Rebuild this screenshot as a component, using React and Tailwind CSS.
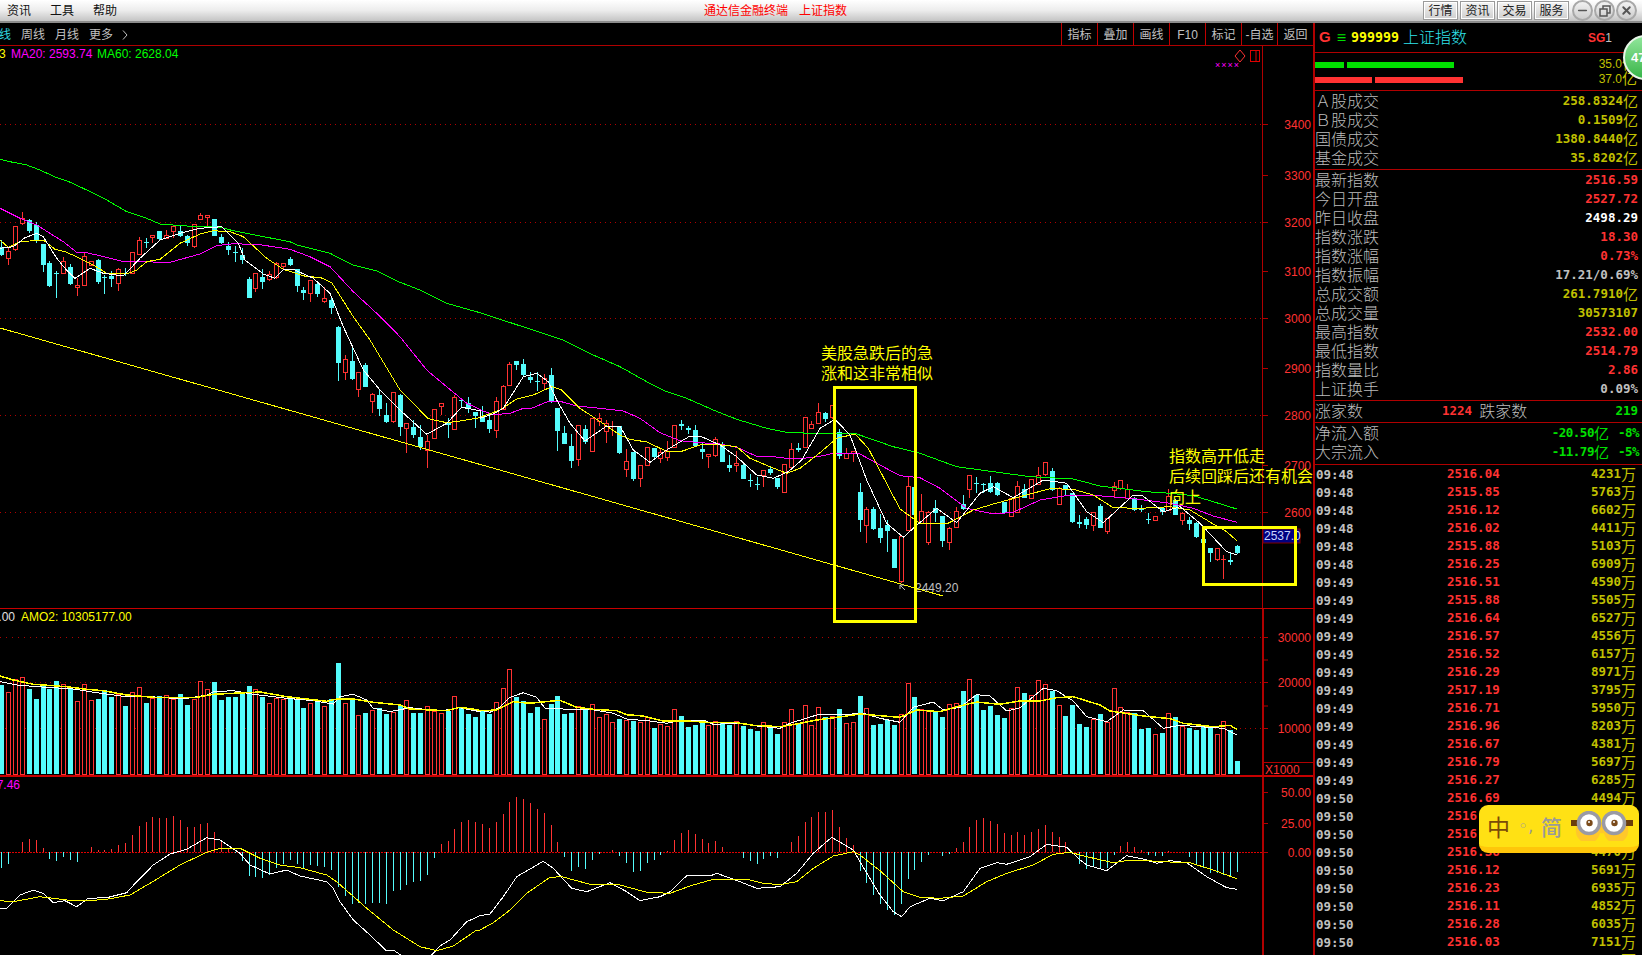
import { Minus, X } from "lucide-react";

const CYAN = "#54fcfc";
const RED = "#ff3232";
const GRID = "#b00000";

// candles as [isRed, bodyTop, bodyBottom, high, low], measured on 3x crops
const candlesA = [
  [0,350,376,330,378],[1,363,384,350,405],[1,289,356,289,362],[1,263,278,246,285],[0,271,304,268,308],
  [0,286,330,277,338],[0,343,405,343,425],[0,398,469,394,472],[0,429,429,423,503],[1,394,429,381,430],
  [0,411,462,403,466],[1,466,472,445,498],[1,379,464,368,465],[1,394,405,392,408],[0,390,456,388,462],
  [0,441,441,436,492],[0,437,447,424,471],[1,418,458,414,484],[0,429,431,414,438],[1,367,428,367,430],
  [1,331,371,322,372],[0,336,336,324,354],[1,314,320,314,340],[0,303,328,303,330],[1,314,323,301,326],
  [1,288,304,286,324],[0,304,318,285,320],[0,318,339,314,348],[1,283,347,281,354],[1,254,266,250,270],
  [1,254,260,254,288],[0,267,318,267,318],[0,322,339,313,342],[0,348,359,337,375],[0,366,366,348,396],
  [0,376,390,354,402],[0,448,503,441,503],[1,428,475,428,486],[0,441,455,418,477],[1,433,447,424,453],
  [1,399,441,395,446],[1,398,408,398,420],[0,387,404,380,407],[0,418,467,418,486],[0,480,489,472,510],
  [1,451,490,450,516],[0,463,491,460,500],[1,503,512,472,518],[0,511,533,503,552],[0,591,698,589,752],
  [1,688,727,676,750],[0,693,748,652,750],[1,727,776,727,801],[0,706,770,700,771],[1,793,814,790,850],
  [0,796,836,776,858],[0,856,876,820,880],[1,787,872,787,880],[0,796,890,793,918],[1,878,895,878,968],
  [0,891,916,870,923],[0,921,951,886,960],[1,934,960,915,1013],[1,836,925,836,926],[1,818,829,818,855],
  [0,879,885,865,923],[1,802,898,795,900],[0,810,810,805,830],[0,820,835,802,848],[0,846,858,846,894],
];
const candlesB = [
  [0,228,245,198,246],[0,240,267,222,278],[1,184,271,170,293],[1,138,207,135,208],[1,73,136,66,137],
  [0,64,75,64,90],[0,72,105,57,110],[0,112,120,97,130],[0,122,122,97,152],[1,115,130,102,148],
  [0,105,187,84,190],[0,205,272,205,332],[0,280,312,258,313],[0,319,362,283,383],[1,256,356,256,378],
  [0,268,305,255,312],[1,235,332,234,333],[1,235,244,220,258],[1,248,272,240,308],[1,258,258,243,288],
  [0,259,339,259,342],[1,364,386,328,410],[0,336,417,336,422],[1,376,413,376,440],[1,322,374,320,376],
  [0,324,352,324,358],[1,337,353,325,368],[1,332,350,304,362],[1,256,321,256,322],[0,253,259,240,269],
  [0,263,271,258,283],[0,270,318,255,318],[0,327,335,307,357],[1,343,349,343,384],[1,298,344,292,352],
  [0,315,366,307,367],[0,375,384,345,396],[1,370,376,333,396],[0,375,417,372,418],[0,419,419,402,440],
  [0,431,431,410,450],[1,391,404,391,441],[0,387,398,378,405],[0,415,441,415,447],[1,373,455,373,456],
];
const candlesC = [
  [1,358,410,340,411],[0,353,360,340,365],[1,262,352,262,353],[1,283,293,274,296],[1,247,278,219,279],
  [0,250,267,247,275],[1,226,262,226,266],[0,305,378,298,386],[1,370,383,354,384],[1,364,370,364,396],
  [0,487,570,460,606],[1,538,586,530,638],[0,538,596,532,600],[0,595,623,552,638],[0,586,602,570,666],
  [0,627,714,627,714],[1,619,752,617,760],[1,469,599,440,600],[0,471,556,471,560],[1,544,580,492,582],
  [1,545,635,544,645],[0,533,548,510,576],[0,558,632,558,650],[1,595,637,590,660],[1,544,590,532,592],
  [0,523,537,495,541],[1,436,478,436,503],[0,459,459,441,490],[0,461,461,458,490],[0,460,486,438,488],
  [0,460,495,456,498],[0,517,550,515,551],[1,505,559,505,560],[1,469,547,453,549],[0,477,503,462,505],
  [1,448,503,448,504],[1,434,462,411,464],[1,397,432,397,437],[0,424,480,414,482],[1,473,521,470,522],
  [0,466,480,464,495],[0,490,576,488,580],[0,576,582,556,594],[0,567,584,560,597],[1,547,584,545,603],
  [0,527,594,522,595],[1,565,602,565,612],[1,469,481,455,504],[1,451,473,451,480],[1,476,505,462,506],
  [0,504,540,502,542],[0,536,536,524,547],[0,566,566,548,582],[1,557,569,557,570],[0,534,545,534,554],
  [1,498,540,478,541],[0,510,554,508,555],[1,549,569,545,585],[0,570,582,560,600],[0,578,622,576,625],
  [0,627,638,600,640],[0,654,668,654,696],[1,655,686,655,693],[1,688,688,676,746],[0,690,695,670,705],
  [0,649,669,645,672],
];

const toY = (oy, z) => oy + z / 3;
const candles = [
  ...candlesA.map((c) => [c[0], ...c.slice(1).map((z) => toY(130, z))]),
  ...candlesB.map((c) => [c[0], ...c.slice(1).map((z) => toY(340, z))]),
  ...candlesC.map((c) => [c[0], ...c.slice(1).map((z) => toY(330, z))]),
];
const slotX = (i) => Math.floor(1.9 + 6.865 * i);

const volTops = [
  ...[255,277,238,232,267,297,258,267,243,253,267,304,253,301,297,271,291,283,318,277,262,309,294,288,286,297,282,315,297,244,268,246,300,291,291,276,258,268,291,310,295,298,291,300,324,310,306,319,297,189,310,300,346,339,331,324,342,336,318,301,339,339,319,333,340,333,289,324,342,351,333,342,307].map((z) => toY(600, z)),
  ...[205,148,231,243,279,261,298,252,228,282,279,259,264,253,292,283,307,297,301,303,305,292,324,313,319,268,288,321,315,303,316,304,309,315,304,318,327,333,307,318,342,307,268,313].map((z) => toY(620, z)),
  ...[256,314,262,290,289,267,310,307,228,265,315,313,300,315,283,190,231,266,271,277,291,253,250,213,178,226,270,258,285,294,265,202,219,226,181,193,213,256,288,255,312,321,297,282,306,205,262,277,280,327,324,343,339,280,291,318,324,330,318,324,343,304,330,423].map((z) => toY(620, z)),
];

const macdEnds = [
  ...[803,792,0,726,717,720,744,776,782,770,779,785,0,741,750,750,747,735,729,705,678,666,651,654,654,648,660,681,681,672,670,696,726,746,760,782,828,830,833,826,805,792,780,792,804,795,798,801,810,862,888,912,908,912,909,909,912,873,870,855,846,843,825,774,732,723,687,666,660,666,672,684,666].map((z) => (z ? toY(600, z) : 0)),
  ...[582,546,531,537,549,567,579,615,666,710,752,740,746,720,702,0,690,708,728,755,752,728,720,705,693,660,639,630,642,657,669,663,681,696,0,714,722,731,717,708,714,0,666,648].map((z) => (z ? toY(620, z) : 0)),
  ...[607,591,576,576,570,621,654,676,752,790,825,851,870,885,852,776,750,725,705,696,707,702,684,666,621,600,594,603,612,639,645,636,645,636,627,615,636,651,666,700,732,747,738,747,744,705,678,666,682,690,705,708,708,693,697,697,710,732,744,759,759,765,768,756].map((z) => (z ? toY(620, z) : 0)),
];

// polylines: each part is [originX, originY, zoomed points]
const pts = (...parts) =>
  parts
    .flatMap(([ox, oy, list]) => list.map(([x, y]) => `${(ox + x / 3).toFixed(1)},${(oy + y / 3).toFixed(1)}`))
    .join(" ");

const ma60 = pts(
  [0,130,[[0,88],[30,95],[80,105],[120,120],[170,143],[200,152],[260,180],[320,210],[380,245],[440,265],[480,282],[560,288],[660,292],[700,302],[780,318],[870,335],[890,345],[990,370],[1060,405],[1130,423],[1200,457],[1260,480],[1340,520],[1440,548]]],
  [480,340,[[250,0],[340,45],[420,80],[500,125],[560,155],[620,175],[700,210],[770,238],[860,265],[920,277],[1020,281]]],
  [780,330,[[230,312],[340,350],[420,370],[530,410],[750,440],[880,447],[960,468],[1100,485],[1170,490],[1240,497],[1300,515],[1370,537]]]
);
const ma20 = pts(
  [0,130,[[0,235],[60,265],[110,285],[190,335],[230,367],[260,368],[320,382],[370,395],[420,393],[470,397],[510,397],[600,372],[650,347],[700,341],[780,344],[870,358],[930,380],[990,410],[1060,485],[1130,550],[1200,620],[1280,720],[1340,770],[1400,820],[1440,838]]],
  [480,340,[[0,210],[40,224],[90,220],[130,205],[155,205],[200,186],[240,184],[290,198],[360,205],[430,213],[480,235],[540,278],[600,302],[660,308],[720,312],[770,322],[830,349],[880,350],[920,355],[960,356],[1020,349]]],
  [780,330,[[160,370],[240,372],[300,405],[360,437],[420,443],[480,475],[560,535],[640,552],[700,547],[780,510],[870,495],[930,495],[1050,505],[1170,520],[1240,535],[1300,558],[1370,577]]]
);
const ma10 = pts(
  [0,130,[[0,330],[25,352],[60,335],[130,330],[165,358],[195,365],[230,380],[280,405],[320,430],[380,432],[410,420],[440,395],[480,388],[540,340],[600,312],[640,302],[690,305],[730,320],[800,385],[850,418],[920,440],[960,442],[995,458],[1060,560],[1110,630],[1200,780],[1285,866],[1340,878],[1380,873],[1440,863]]],
  [480,340,[[0,232],[60,210],[110,177],[160,165],[215,140],[245,150],[300,205],[350,238],[420,285],[450,298],[500,306],[560,334],[605,334],[660,315],[700,312],[770,320],[810,355],[870,380],[920,400],[960,385],[1020,338]]],
  [780,330,[[170,325],[225,312],[265,355],[360,537],[420,580],[500,582],[580,540],[640,522],[720,500],[810,476],[880,478],[940,495],[1000,533],[1080,535],[1170,530],[1230,540],[1300,582],[1340,605],[1370,632]]]
);
const ma5 = pts(
  [0,130,[[0,355],[40,350],[75,323],[110,310],[130,320],[170,385],[195,415],[225,445],[270,415],[310,430],[370,438],[420,385],[480,330],[540,310],[600,295],[665,290],[715,340],[735,390],[790,432],[825,445],[850,420],[880,418],[940,445],[990,490],[1030,590],[1090,720],[1140,780],[1200,840],[1280,913],[1340,880],[1385,832],[1440,842]]],
  [480,340,[[0,235],[40,222],[70,205],[130,110],[170,100],[205,125],[230,180],[270,250],[315,303],[380,258],[420,258],[460,330],[510,367],[560,330],[630,288],[660,288],[720,315],[770,350],[830,405],[880,415],[925,395],[965,360],[1020,265]]],
  [780,330,[[165,268],[210,315],[260,450],[320,580],[370,622],[405,590],[470,535],[530,578],[600,490],[640,470],[700,503],[790,450],[860,460],[920,545],[970,578],[1060,495],[1085,495],[1150,545],[1200,530],[1260,580],[1340,665],[1370,675]]]
);
const volWhite = pts(
  [0,600,[[0,245],[50,255],[110,260],[220,267],[290,278],[370,289],[450,290],[550,297],[620,285],[640,275],[700,272],[760,283],[860,295],[940,302],[1000,312],[1020,290],[1060,283],[1100,300],[1120,325],[1170,335],[1230,323],[1320,333],[1380,323],[1440,335]]],
  [480,620,[[0,270],[30,277],[60,262],[90,232],[130,218],[170,232],[195,265],[270,268],[330,268],[400,280],[440,297],[510,303],[560,310],[600,302],[640,302],[670,300],[700,313],[780,310],[830,318],[900,325]]],
  [780,620,[[30,310],[110,285],[200,283],[250,280],[300,295],[360,307],[400,262],[460,246],[490,270],[540,262],[590,224],[630,228],[680,273],[720,263],[790,205],[830,212],[880,243],[920,290],[980,305],[1030,270],[1090,272],[1150,325],[1200,316],[1260,320],[1330,325],[1370,345]]]
);
const volYellow = pts(
  [0,600,[[0,228],[40,240],[100,253],[200,260],[260,268],[310,272],[380,285],[460,292],[590,292],[640,283],[780,276],[860,290],[980,304],[1010,297],[1060,297],[1120,307],[1200,315],[1230,327],[1340,332],[1380,322],[1430,329]]],
  [480,620,[[0,272],[50,270],[100,245],[150,250],[240,241],[290,262],[340,268],[410,272],[440,284],[490,288],[550,303],[620,303],[700,308],[770,308],[820,316],[900,320]]],
  [780,620,[[50,312],[110,300],[200,288],[240,282],[300,287],[360,292],[410,270],[480,275],[540,258],[590,246],[660,253],[720,243],[780,243],[830,233],[880,230],[960,255],[990,273],[1090,288],[1170,296],[1210,310],[1300,320],[1350,316],[1370,328]]]
);
const difLeft = pts(
  [0,600,[[0,925],[20,925],[60,885],[100,870],[130,880],[160,908],[195,902],[230,920],[265,895],[320,893],[380,878],[410,845],[460,795],[510,762],[560,748],[620,713],[660,720],[720,760],[750,795],[810,822],[860,810],[900,828],[980,845],[1000,865],[1020,905],[1060,960],[1110,1005],[1160,1053],[1180,1050],[1210,1070]]]
);
const difRight = pts(
  [0,600,[[1290,1070],[1320,1038],[1350,1020],[1400,965]]],
  [480,620,[[0,887],[30,882],[70,830],[110,770],[190,724],[220,745],[275,805],[320,815],[390,788],[440,815],[480,842],[540,830],[570,815],[620,767],[690,768],[710,760],[780,785],[830,805],[900,800]]],
  [780,620,[[50,760],[100,700],[155,652],[220,690],[240,725],[300,825],[340,875],[365,890],[390,860],[450,835],[490,842],[550,815],[600,745],[650,728],[680,733],[750,710],[800,673],[860,682],[900,720],[920,735],[980,752],[1040,707],[1090,717],[1130,730],[1170,722],[1220,728],[1280,770],[1340,803],[1370,808]]]
);
const dea = pts(
  [0,600,[[0,902],[40,905],[120,890],[200,900],[260,902],[320,898],[390,885],[450,850],[540,795],[620,757],[660,745],[720,745],[780,775],[840,795],[900,803],[980,825],[1010,845],[1100,925],[1180,990],[1260,1040],[1310,1052],[1360,1038],[1430,990]]],
  [480,620,[[0,930],[40,908],[90,870],[140,820],[210,772],[245,770],[330,793],[420,795],[500,817],[570,820],[630,798],[700,778],[800,778],[850,790],[900,794]]],
  [780,620,[[50,785],[100,745],[160,708],[220,695],[240,705],[300,752],[370,815],[420,832],[480,835],[550,828],[620,785],[680,760],[760,735],[820,703],[870,697],[920,710],[1000,728],[1050,720],[1100,722],[1170,726],[1230,728],[1300,750],[1370,776]]]
);

const quotes = [
  ["Ａ股成交", "258.8324", "亿"],
  ["Ｂ股成交", "0.1509", "亿"],
  ["国债成交", "1380.8440", "亿"],
  ["基金成交", "35.8202", "亿"],
];
const indexRows = [
  ["最新指数", "2516.59", "text-[#ff3232]"],
  ["今日开盘", "2527.72", "text-[#ff3232]"],
  ["昨日收盘", "2498.29", "text-white"],
  ["指数涨跌", "18.30", "text-[#ff3232]"],
  ["指数涨幅", "0.73%", "text-[#ff3232]"],
  ["指数振幅", "17.21/0.69%", "text-[#c0c0c0]"],
  ["总成交额", "261.7910", "text-[#c0c000]", "亿"],
  ["总成交量", "30573107", "text-[#c0c000]"],
  ["最高指数", "2532.00", "text-[#ff3232]"],
  ["最低指数", "2514.79", "text-[#ff3232]"],
  ["指数量比", "2.86", "text-[#ff3232]"],
  ["上证换手", "0.09%", "text-[#c0c0c0]"],
];
const trades = [
  ["09:48","2516.04","4231"],["09:48","2515.85","5763"],["09:48","2516.12","6602"],["09:48","2516.02","4411"],
  ["09:48","2515.88","5103"],["09:48","2516.25","6909"],["09:49","2516.51","4590"],["09:49","2515.88","5505"],
  ["09:49","2516.64","6527"],["09:49","2516.57","4556"],["09:49","2516.52","6157"],["09:49","2516.29","8971"],
  ["09:49","2517.19","3795"],["09:49","2516.71","5950"],["09:49","2516.96","8203"],["09:49","2516.67","4381"],
  ["09:49","2516.79","5697"],["09:49","2516.27","6285"],["09:50","2516.69","4494"],["09:50","2516",""],
  ["09:50","2516",""],["09:50","2516.36","4470"],["09:50","2516.12","5691"],["09:50","2516.23","6935"],
  ["09:50","2516.11","4852"],["09:50","2516.28","6035"],["09:50","2516.03","7151"],["","","4"],
];

const MONO = "font-['DejaVu_Sans_Mono',monospace] font-bold text-[12.5px]";

const Dotted = ({ y, dash = "1 4" }) => (
  <line x1="0" x2="1263" y1={y} y2={y} stroke={GRID} strokeDasharray={dash} shapeRendering="crispEdges" />
);
const AxisLabel = ({ y, children }) => (
  <g>
    <line x1="1263" x2="1268" y1={y} y2={y} stroke={GRID} shapeRendering="crispEdges" />
    <text x="1311" y={y + 5} fontSize="12" fill={RED} textAnchor="end">{children}</text>
  </g>
);

const Line = ({ points, color, width = 1 }) => (
  <polyline points={points} fill="none" stroke={color} strokeWidth={width} shapeRendering="crispEdges" />
);

function Candle({ data, i }) {
  const [isRed, top, bottom, high, low] = data;
  const x = slotX(i);
  const color = isRed ? RED : CYAN;
  return (
    <g shapeRendering="crispEdges">
      <rect x={x} y={high} width="1" height={Math.max(top - high, 0)} fill={color} />
      <rect x={x} y={bottom} width="1" height={Math.max(low - bottom, 0)} fill={color} />
      {top === bottom ? (
        <rect x={x - 2} y={top} width="5" height="1" fill={color} />
      ) : isRed ? (
        <rect x={x - 1.5} y={top + 0.5} width="4" height={bottom - top} fill="#000" stroke={color} />
      ) : (
        <rect x={x - 2} y={top} width="5" height={bottom - top} fill={color} />
      )}
    </g>
  );
}

function MainChart() {
  return (
    <svg width="1314" height="563" viewBox="0 46 1314 563" className="block relative z-10 overflow-visible">
      {[124, 222, 318, 415, 512].map((y) => <Dotted key={y} y={y} />)}
      <text x="-1" y="58" fontSize="12" fill="#ffff00">3</text>
      <text x="11" y="58" fontSize="12" fill="#ff00ff">MA20: 2593.74</text>
      <text x="97" y="58" fontSize="12" fill="#00ff00">MA60: 2628.04</text>
      <polygon points="1240,50 1245,56 1240,62 1235,56" fill="none" stroke={RED} />
      <rect x="1250.5" y="50.5" width="9" height="11" fill="none" stroke="#e00000" />
      <line x1="1256" x2="1256" y1="50" y2="62" stroke="#e00000" />
      <text x="1215" y="68" fontSize="9" fill="#ff00ff" letterSpacing="1">××××</text>

      <line x1="1262.5" x2="1262.5" y1="46" y2="609" stroke={GRID} />
      {[[124,3400],[175,3300],[222,3200],[271,3100],[318,3000],[368,2900],[415,2800],[465,2700],[512,2600]].map(([y, label]) => (
        <AxisLabel key={label} y={y}>{label}</AxisLabel>
      ))}

      {candles.map((c, i) => <Candle key={i} data={c} i={i} />)}
      <Line points={ma60} color="#00ff00" />
      <Line points={ma20} color="#ff00ff" />
      <Line points={ma10} color="#ffff00" />
      <Line points={ma5} color="#ffffff" />
      <Line points="0,328 943,596" color="#ffff00" />

      <path d="M905 590 L900 585 M900 585 L900 589 M900 585 L904 585" stroke="#c0c0c0" fill="none" />
      <text x="915" y="592" fontSize="12" fill="#c0c0c0">2449.20</text>

      <rect x="1263" y="529" width="37" height="14" fill="#000080" stroke="#800000" />
      <text x="1264" y="540" fontSize="12" fill="#c8d4ff">2537.0</text>

      <line x1="0" x2="1314" y1="608.5" y2="608.5" stroke="#c80000" />
      <rect x="834.5" y="387.5" width="81" height="234" fill="none" stroke="#ffff00" strokeWidth="3" shapeRendering="crispEdges" />
      <rect x="1203.5" y="527.5" width="92" height="57" fill="none" stroke="#ffff00" strokeWidth="3" shapeRendering="crispEdges" />
      <g fontSize="16" fill="#ffff00">
        <text x="821" y="359">美股急跌后的急</text>
        <text x="821" y="379">涨和这非常相似</text>
        <text x="1169" y="462">指数高开低走</text>
        <text x="1169" y="482">后续回踩后还有机会</text>
        <text x="1169" y="503">向上</text>
      </g>
    </svg>
  );
}

function VolumeChart() {
  return (
    <svg width="1314" height="168" viewBox="0 609 1314 168" className="block">
      <text x="15" y="621" fontSize="12" fill="#e0e0e0" textAnchor="end">.00</text>
      <text x="21" y="621" fontSize="12" fill="#ffff00">AMO2: 10305177.00</text>
      <Dotted y={637} dash="1 5" />
      <Dotted y={682} dash="1 4" />
      <Dotted y={728} dash="1 4" />
      <rect x="1262" y="609" width="2" height="168" fill={GRID} />
      <AxisLabel y={637}>30000</AxisLabel>
      <line x1="1263" x2="1268" y1="660" y2="660" stroke={GRID} />
      <AxisLabel y={682}>20000</AxisLabel>
      <line x1="1263" x2="1268" y1="706" y2="706" stroke={GRID} />
      <AxisLabel y={728}>10000</AxisLabel>

      {volTops.map((top, i) => {
        const x = slotX(i);
        const isRed = candles[i][0];
        return isRed ? (
          <rect key={i} x={x - 1.5} y={top + 0.5} width="4" height={773.5 - top} fill="#000" stroke={RED} shapeRendering="crispEdges" />
        ) : (
          <rect key={i} x={x - 2} y={top} width="5" height={774 - top} fill={CYAN} shapeRendering="crispEdges" />
        );
      })}
      <Line points={volWhite} color="#ffffff" />
      <Line points={volYellow} color="#ffff00" width={1.5} />

      <rect x="1263.5" y="762.5" width="50" height="13" fill="none" stroke={GRID} />
      <text x="1265" y="774" fontSize="12" fill={RED}>X1000</text>
      <rect x="0" y="775" width="1314" height="2" fill="#c80000" />
    </svg>
  );
}

function MacdChart() {
  return (
    <svg width="1314" height="178" viewBox="0 777 1314 178" className="block">
      <text x="20" y="789" fontSize="12" fill="#ff00ff" textAnchor="end">7.46</text>
      <rect x="1262" y="777" width="2" height="178" fill={GRID} />
      <AxisLabel y={792}>50.00</AxisLabel>
      <AxisLabel y={823}>25.00</AxisLabel>
      <AxisLabel y={852}>0.00</AxisLabel>
      <line x1="0" x2="1263" y1="852.5" y2="852.5" stroke="#e00000" strokeDasharray="2 1" shapeRendering="crispEdges" />
      {macdEnds.map((end, i) =>
        end ? (
          <rect
            key={i}
            x={slotX(i)}
            y={Math.min(end, 852)}
            width="1"
            height={Math.abs(end - 852)}
            fill={end > 852 ? CYAN : RED}
            shapeRendering="crispEdges"
          />
        ) : null
      )}
      <Line points={difLeft} color="#ffffff" />
      <Line points={difRight} color="#ffffff" />
      <Line points={dea} color="#ffff00" />
    </svg>
  );
}

const titleBtn =
  "h-[19px] w-[35px] flex items-center justify-center text-[12px] text-[#222] border border-[#9a9a9a] bg-gradient-to-b from-[#f4f4f4] to-[#cfcfcf] shadow-[inset_0_0_0_1px_#fff]";
const roundBtn =
  "w-[21px] h-[21px] rounded-full flex items-center justify-center border-2 border-[#a8a8a8] bg-gradient-to-b from-[#f2f2f2] to-[#cccccc] text-[#555]";

function TitleBar() {
  return (
    <div className="h-[23px] flex items-center bg-gradient-to-b from-white via-[#ececec] to-[#c4c4c4] border-b-2 border-[#8c8c8c]">
      {["资讯", "工具", "帮助"].map((m) => (
        <span key={m} className="w-[43px] pl-[7px] pt-px text-[12px] text-[#111]">{m}</span>
      ))}
      <div className="ml-[575px] pt-px flex gap-[11px] text-[12px] text-[#ff0000]">
        <span>通达信金融终端</span>
        <span>上证指数</span>
      </div>
      <div className="ml-auto mr-[5px] flex items-center">
        <div className="flex gap-[2px] mr-[3px]">
          {["行情", "资讯", "交易", "服务"].map((b) => (
            <span key={b} className={titleBtn}>{b}</span>
          ))}
        </div>
        <div className="flex gap-px">
          <span className={roundBtn}><Minus size={13} strokeWidth={3} /></span>
          <span className={roundBtn}>
            <svg width="12" height="12" viewBox="0 0 12 12" fill="none" stroke="#555" strokeWidth="1.5">
              <rect x="1" y="4" width="7" height="7" />
              <path d="M4 4V1h7v7H8" />
            </svg>
          </span>
          <span className={roundBtn}><X size={13} strokeWidth={3.5} /></span>
        </div>
      </div>
    </div>
  );
}

function ChartToolbar() {
  return (
    <div className="h-[23px] flex items-center justify-between border-b border-[#b00000] text-[12px] text-[#c0c0c0]">
      <div className="flex items-center -ml-px pt-[2px]">
        <span className="w-[22px] text-[#2fd8e0]">线</span>
        <span className="w-[34px]">周线</span>
        <span className="w-[34px]">月线</span>
        <span className="w-[33px]">更多</span>
        <svg width="6" height="10" viewBox="0 0 6 10" fill="none" stroke="#c0c0c0"><path d="M1 0.5 L5 5 L1 9.5" /></svg>
      </div>
      <div className="flex h-full">
        {["指标", "叠加", "画线", "F10", "标记", "-自选", "返回"].map((b) => (
          <span key={b} className="w-9 h-full pt-[2px] flex items-center justify-center border-l border-[#c00000]">{b}</span>
        ))}
      </div>
    </div>
  );
}

function Unit({ children }) {
  return <span className="-translate-y-px text-[15px] leading-none font-normal text-[#c0c000] font-['Noto_Sans_CJK_SC',sans-serif]">{children}</span>;
}

function QuoteRow({ label, children }) {
  return (
    <div className="h-[19px] flex items-center justify-between">
      <span className="text-[16px] leading-none text-[#bcbcbc] font-light">{label}</span>
      <span className={`${MONO} flex items-center`}>{children}</span>
    </div>
  );
}

function RightPanel() {
  return (
    <div className="w-[329px] h-[932px] overflow-hidden border-l-2 border-[#b00000]">
      <div className="h-[30px] flex items-center border-b border-[#b00000] pl-[4px] pr-[30px]">
        <span className="text-[15px] font-bold text-[#ff3232]">G</span>
        <span className="ml-[6px] text-[16px] leading-none text-[#00e000]">≡</span>
        <span className="ml-[5px] font-['DejaVu_Sans_Mono',monospace] font-bold text-[13.3px] text-[#ffff00]">999999</span>
        <span className="ml-[4px] text-[16px] text-[#2fe4ec] font-light">上证指数</span>
        <span className="ml-auto text-[12px]">
          <b className="text-[#ff3232]">SG</b><span className="text-[#c0c0c0]">1</span>
        </span>
      </div>

      <div className="h-[38px] pt-[3px] border-b border-[#b00000] pr-[5px] text-[12px] text-[#c0c000]">
        <div className="h-[15px] flex items-center">
          <div className="flex gap-[3px] mt-[2px]">
            <span className="w-[29px] h-[6px] bg-[#00e000]" />
            <span className="w-[107px] h-[6px] bg-[#00e000]" />
          </div>
          <span className="ml-auto flex items-center">35.0<span className="text-[15px] leading-none">亿</span></span>
        </div>
        <div className="h-[15px] flex items-center">
          <div className="flex gap-[3px] mt-[2px]">
            <span className="w-[57px] h-[6px] bg-[#ff3232]" />
            <span className="w-[88px] h-[6px] bg-[#ff3232]" />
          </div>
          <span className="ml-auto flex items-center">37.0<span className="text-[15px] leading-none">亿</span></span>
        </div>
      </div>

      <div className="h-[79px] pt-px pr-[4px] border-b border-[#b00000]">
        {quotes.map(([label, value, unit]) => (
          <QuoteRow key={label} label={label}>
            <span className="text-[#c0c000]">{value}</span><Unit>{unit}</Unit>
          </QuoteRow>
        ))}
      </div>

      <div className="h-[231px] pt-px pr-[4px] border-b border-[#b00000]">
        {indexRows.map(([label, value, color, unit]) => (
          <QuoteRow key={label} label={label}>
            <span className={color}>{value}</span>{unit && <Unit>{unit}</Unit>}
          </QuoteRow>
        ))}
      </div>

      <div className="h-[22px] flex items-center pr-[4px] border-b border-[#b00000]">
        <span className="text-[16px] leading-none text-[#bcbcbc] font-light">涨家数</span>
        <span className={`${MONO} ml-[79px] text-[#ff3232]`}>1224</span>
        <span className="ml-[7px] text-[16px] leading-none text-[#bcbcbc] font-light">跌家数</span>
        <span className={`${MONO} ml-auto text-[#00e000]`}>219</span>
      </div>

      <div className="h-[42px] pt-px pr-[3px] border-b border-[#b00000]">
        {[["净流入额", "-20.50", "-8%"], ["大宗流入", "-11.79", "-5%"]].map(([label, value, pct]) => (
          <div key={label} className="h-[19px] flex items-center">
            <span className="text-[16px] leading-none text-[#bcbcbc] font-light">{label}</span>
            <span className={`${MONO} ml-auto text-[#00e000] tracking-[-0.5px]`}>{value}</span>
            <span className="-translate-y-px text-[15px] leading-none text-[#00e000] font-['Noto_Sans_CJK_SC',sans-serif]">亿</span>
            <span className={`${MONO} ml-[9px] text-[#00e000] tracking-[-0.5px]`}>{pct}</span>
          </div>
        ))}
      </div>

      {trades.map(([time, price, vol], i) => (
        <div key={i} className="h-[18px] flex items-center pl-px pr-[6px]">
          <span className={`${MONO} w-[131px] h-4 text-[#c0c0c0]`}>{time}</span>
          <span className={`${MONO} text-[#ff3232]`}>{price}</span>
          {vol && (
            <span className={`${MONO} ml-auto flex items-center text-[#c0c000]`}>
              {vol}<Unit>万</Unit>
            </span>
          )}
        </div>
      ))}
    </div>
  );
}

function ImeBar() {
  return (
    <div className="absolute left-[1479px] top-[805px] w-[160px] h-[48px] flex items-center rounded-[9px] bg-[#ffe114] border-b-[6px] border-[#ffc60a] pl-[8px]">
      <span className="w-[23px] text-[23px] leading-none text-[#7a4a08] font-['Noto_Sans_CJK_SC',sans-serif]">中</span>
      <span className="ml-[8px] w-[22px] text-[17px] leading-none text-[#9a9a9a] font-['DejaVu_Sans',sans-serif]">◦,</span>
      <span className="w-[22px] ml-px text-[21px] leading-none font-medium text-[#9a9a9a] font-['Noto_Sans_CJK_SC',sans-serif]">简</span>
      <svg width="62" height="30" viewBox="0 0 62 30" className="ml-[8px]">
        <path d="M5 12h52v6a12 12 0 0 1-24 4 12 12 0 0 1-4 0 12 12 0 0 1-24-4z" fill="#ffc82a" />
        <rect x="0" y="9" width="7" height="6" fill="#6b3d0a" />
        <rect x="55" y="9" width="7" height="6" fill="#6b3d0a" />
        <circle cx="18" cy="12" r="10.5" fill="#fff" stroke="#9a9aa4" strokeWidth="3.5" />
        <circle cx="43" cy="12" r="10.5" fill="#fff" stroke="#9a9aa4" strokeWidth="3.5" />
        <circle cx="18.5" cy="12" r="3.2" fill="#7a4a1a" />
        <circle cx="43.5" cy="12" r="3.2" fill="#7a4a1a" />
        <circle cx="18" cy="11" r="1" fill="#fff" />
        <circle cx="43" cy="11" r="1" fill="#fff" />
      </svg>
    </div>
  );
}

export default function App() {
  return (
    <div className="relative w-[1642px] h-[955px] overflow-hidden bg-black font-['Liberation_Sans','Noto_Sans_CJK_SC',sans-serif]">
      <TitleBar />
      <div className="flex">
        <div className="w-[1313px] shrink-0">
          <ChartToolbar />
          <MainChart />
          <VolumeChart />
          <MacdChart />
        </div>
        <RightPanel />
      </div>
      <ImeBar />
      <div className="absolute left-[1623px] top-[35px] w-[45px] h-[45px] rounded-full border-2 border-[#e8f5e8] bg-gradient-to-b from-[#8fe69a] to-[#35b548] pl-[6px] flex items-center text-[13px] font-bold text-white">
        47
      </div>
    </div>
  );
}
